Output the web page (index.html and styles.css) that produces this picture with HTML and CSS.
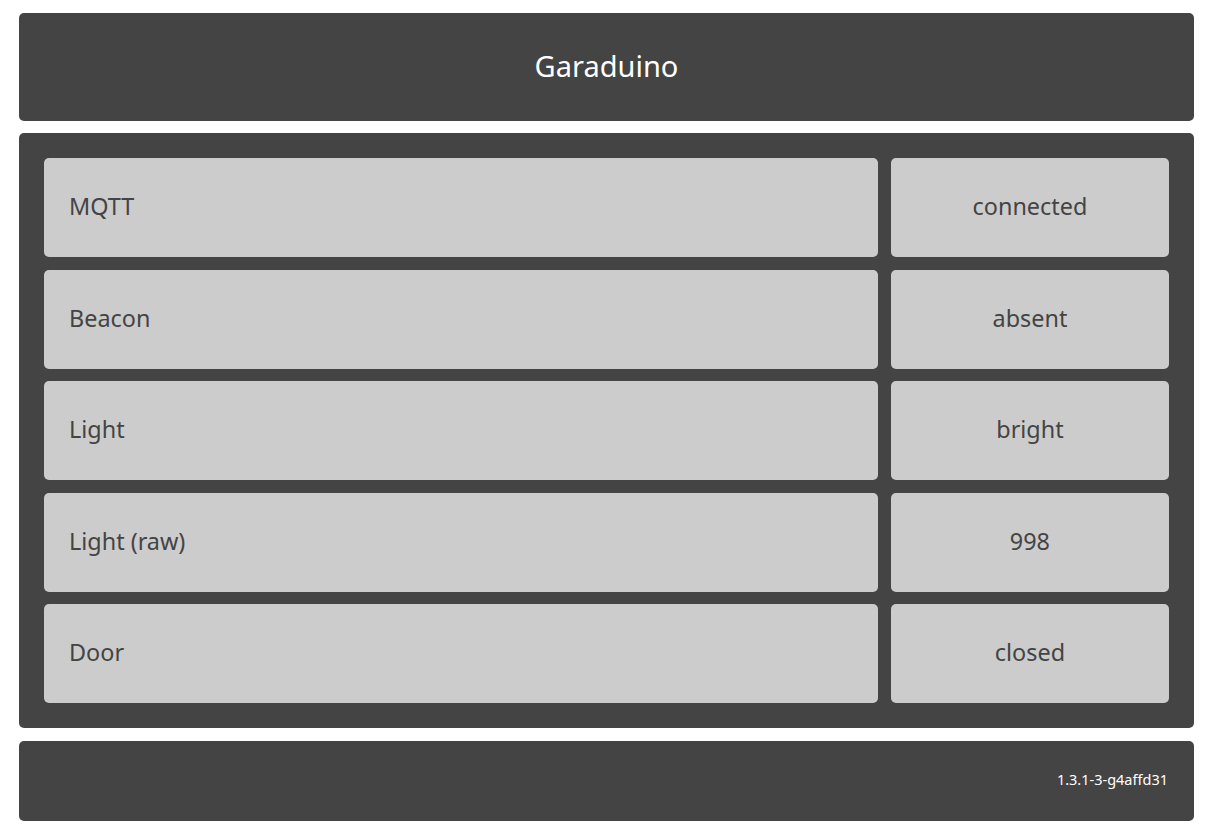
FILE: index.html
```html
<!DOCTYPE html>
<html>
<head>
<meta charset="utf-8">
<title>Garaduino</title>
<link rel="stylesheet" href="styles.css">
</head>
<body>
<div class="page">
  <header class="panel header">Garaduino</header>
  <main class="panel main">
    <div class="cell label">MQTT</div><div class="cell value">connected</div>
    <div class="cell label">Beacon</div><div class="cell value">absent</div>
    <div class="cell label">Light</div><div class="cell value">bright</div>
    <div class="cell label">Light (raw)</div><div class="cell value">998</div>
    <div class="cell label">Door</div><div class="cell value">closed</div>
  </main>
  <footer class="panel footer"><span class="version">1.3.1-3-g4affd31</span></footer>
</div>
</body>
</html>
```
FILE: styles.css
```css
html, body {
  margin: 0;
  padding: 0;
  background: #ffffff;
}
body {
  font-family: "Noto Sans", "Open Sans", sans-serif;
}
.page {
  display: flex;
  flex-direction: column;
  gap: 12.5px;
  padding: 13px 17px 0 19px;
}
.panel {
  background: #444444;
  border-radius: 5px;
}
.header {
  height: 107.6px;
  box-sizing: border-box;
  padding-bottom: 3px;
  display: flex;
  align-items: center;
  justify-content: center;
  color: #ffffff;
  font-size: 29px;
}
.main {
  display: grid;
  grid-template-columns: 3fr 1fr;
  grid-auto-rows: 99px;
  gap: 12.5px 12.5px;
  padding: 25px;
}
.cell {
  box-sizing: border-box;
  padding-bottom: 3px;
  background: #cccccc;
  border-radius: 5px;
  color: #444444;
  font-size: 23.4px;
  display: flex;
  align-items: center;
}
.label {
  padding-left: 25px;
}
.value {
  justify-content: center;
}
.footer {
  height: 80px;
  box-sizing: border-box;
  padding-bottom: 3px;
  display: flex;
  align-items: center;
  justify-content: flex-end;
  padding-right: 26px;
}
.version {
  color: #ffffff;
  font-size: 14.5px;
}
```
